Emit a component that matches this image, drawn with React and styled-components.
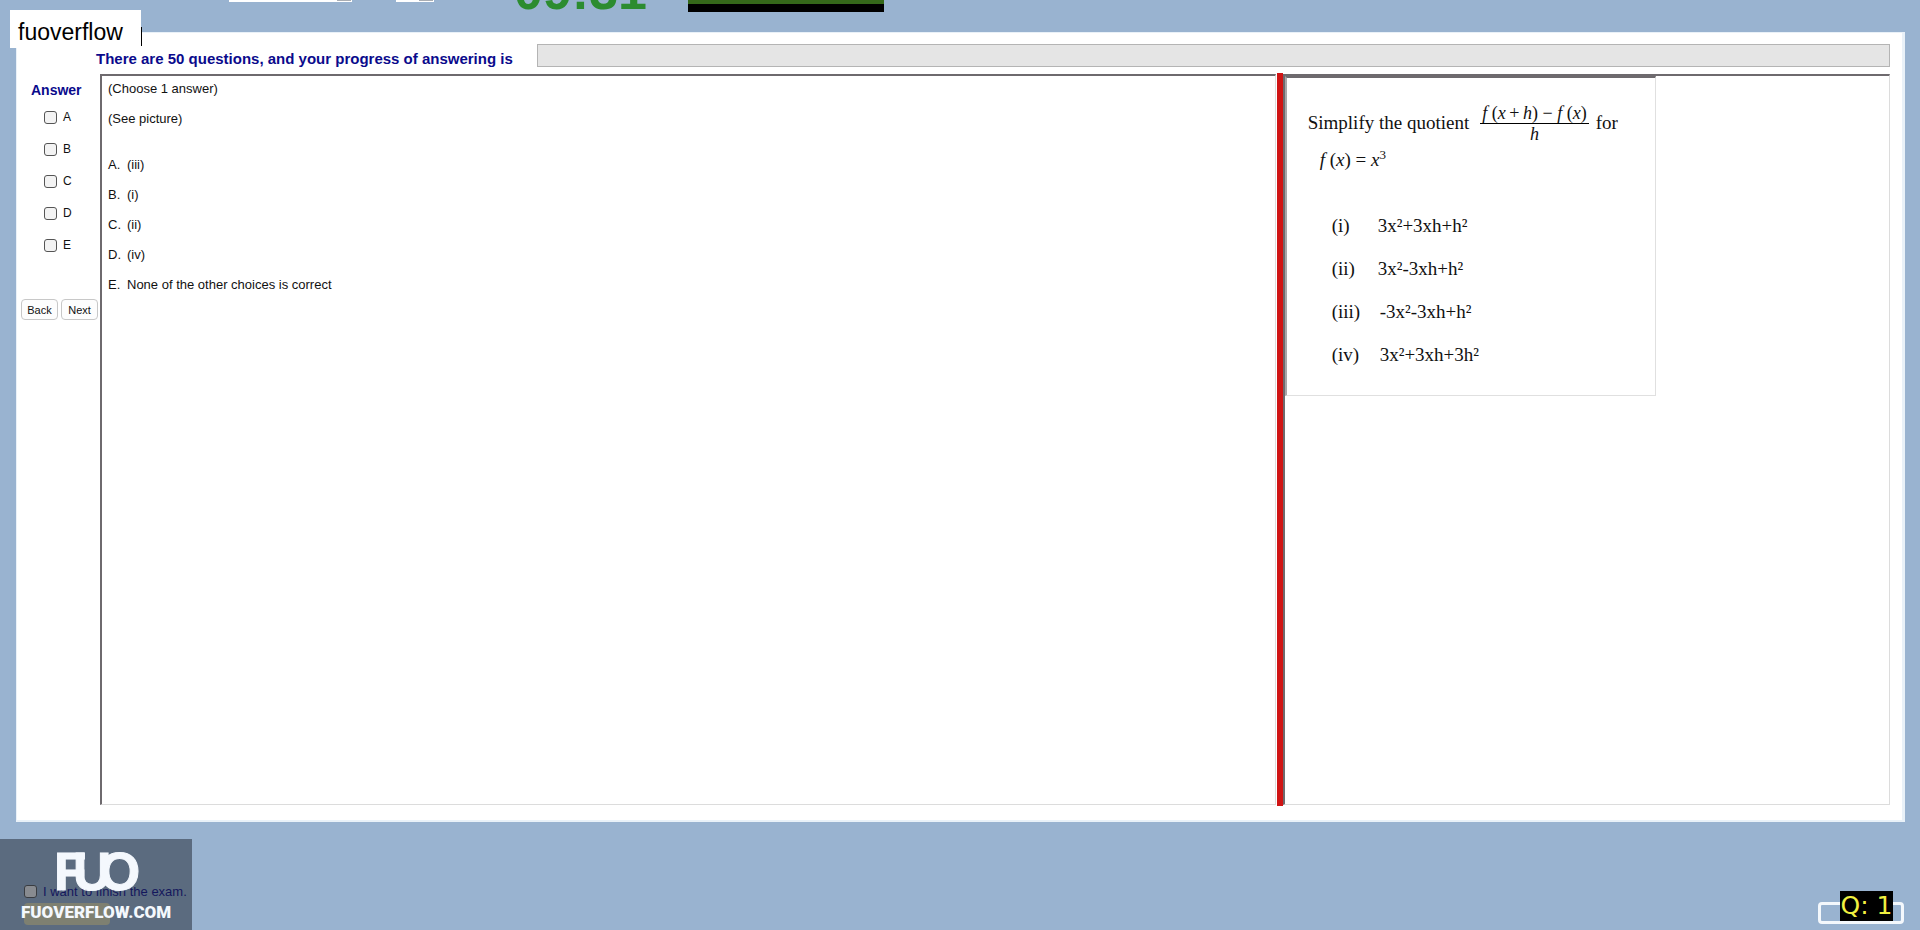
import React from 'react'
import styled, { createGlobalStyle } from 'styled-components'

const GlobalStyle = createGlobalStyle`
  * {
    box-sizing: border-box;
  }

  body {
    margin: 0;
    background: #99b3d0;
    color: #111;
    font-family: "Liberation Sans", Arial, sans-serif;
    font-size: 13px;
  }
`

const Page = styled.div`
  position: relative;
  display: flex;
  flex-direction: column;
  min-height: 100vh;
  overflow: hidden;
`

const Header = styled.header`
  display: flex;
  align-items: flex-end;
  height: 32px;
  padding: 0 0 20px 229px;
  overflow: hidden;
`

const HeaderSelect = styled.select`
  appearance: none;
  flex: none;
  width: ${props => props.$width}px;
  height: 24px;
  margin: 0 44px 10px 0;
  border: 0;
  background: linear-gradient(#a9adb3, #a9adb3) right 1px bottom 1px / 14px 20px no-repeat #fff;
`

const Clock = styled.time`
  height: 47px;
  margin: 0 41px 0 36px;
  color: #2c8c30;
  font-size: 52px;
  font-weight: bold;
  line-height: 52px;
`

const Banner = styled.div`
  width: 196px;
  height: 40px;
  border-bottom: 8px solid #000;
  background: #35691a;
`

const Panel = styled.main`
  flex: 1;
  display: flex;
  flex-direction: column;
  margin: 0 15px 0 16px;
  padding: 11px 12px 15px 0;
  border: solid #e9f1f8;
  border-width: 1px 3px 2px 1px;
  background: #fff;
`

const ProgressRow = styled.div`
  display: flex;
  align-items: flex-end;
  gap: 24px;
  padding-left: 79px;
  margin-bottom: 7px;
`

const ProgressLabel = styled.span`
  color: #0a0a8c;
  font-size: 15px;
  font-weight: bold;
  line-height: 16px;
`

const ProgressBar = styled.div`
  flex: 1;
  height: 23px;
  border: 1px solid #b4b4b4;
  background: #e5e5e5;
`

const Workspace = styled.div`
  flex: 1;
  display: flex;
`

const AnswerColumn = styled.form`
  width: 83px;
  padding-top: 8px;
`

const AnswerTitle = styled.h2`
  margin: 0 0 11px 14px;
  color: #0a0a8c;
  font-size: 14px;
  line-height: 16px;
`

const AnswerOption = styled.label`
  display: flex;
  align-items: center;
  gap: 6px;
  height: 16px;
  margin: 0 0 16px 27px;
  font-size: 12px;
`

const Checkbox = styled.input`
  appearance: none;
  width: 13px;
  height: 13px;
  margin: 0;
  border: 1px solid #555;
  border-radius: 3px;
  background: #f3f3f3;
`

const ButtonRow = styled.div`
  display: flex;
  gap: 3px;
  padding: 30px 0 0 4px;
`

const NavButton = styled.button`
  width: 37px;
  height: 21px;
  padding: 0;
  border: 1px solid #c8c8c8;
  border-radius: 4px;
  background: #fdfdfd;
  color: #111;
  font-family: inherit;
  font-size: 11px;
`

const Pane = styled.section`
  flex: ${props => props.$grow} 1 0;
  min-width: 0;
  border: solid #dcdcdc;
  border-width: 2px 1px 1px 2px;
  border-top-color: #6e6a6e;
  border-left-color: #6e6a6e;
`

const Splitter = styled.div`
  width: 6px;
  margin: -1px 0 -1px 1px;
  background: #d01414;
`

const Question = styled.div`
  padding: 5px 6px;
  line-height: 16px;
`

const Line = styled.p`
  margin: 0 0 14px;
`

const Choices = styled.ol`
  margin: 30px 0 0;
  padding: 0;
  list-style: none;
`

const Choice = styled.li`
  display: flex;
  margin-bottom: 14px;
`

const Letter = styled.span`
  width: 19px;
`

const Picture = styled.div`
  width: 371px;
  height: 320px;
  padding: 23px 0 0 21px;
  border: solid #e0e0e0;
  border-width: 2px 1px 1px 2px;
  border-top-color: #6e6a6e;
  border-left-color: #a8a6a8;
  font-family: "Liberation Serif", "Times New Roman", serif;
  font-size: 19px;
  line-height: 20px;
`

const Statement = styled.div`
  display: flex;
  align-items: center;
`

const Fraction = styled.span`
  display: flex;
  flex-direction: column;
  align-items: center;
  margin: 2px 7px 0 11px;
  font-size: 18px;
`

const Numerator = styled.span`
  padding: 0 2px;
  border-bottom: 1px solid #000;
`

const Formula = styled.div`
  padding: 6px 0 0 12px;

  sup {
    font-size: 13px;
    line-height: 0;
  }
`

const Expressions = styled.dl`
  display: grid;
  grid-template-columns: 46px auto;
  row-gap: 23px;
  margin: 46px 0 0 24px;
`

const Term = styled.dt`
  margin: 0;
`

const Value = styled.dd`
  margin: 0;
  padding-left: ${props => (props.$indent ? 2 : 0)}px;
`

const Footer = styled.footer`
  display: flex;
  justify-content: space-between;
  height: 108px;
`

const Brand = styled.div`
  position: absolute;
  left: 10px;
  top: 10px;
  width: 131px;
  padding: 10px 8px 4px;
  background: #fff;
  color: #000;
  font-size: 23px;
  line-height: 24px;

  &::after {
    content: "";
    position: absolute;
    right: -1px;
    bottom: 2px;
    width: 1px;
    height: 19px;
    background: #000;
  }
`

const FinishArea = styled.div`
  position: relative;
  width: 192px;
  margin-top: 17px;
  padding: 44px 0 0 24px;
`

const FinishOption = styled.label`
  display: flex;
  align-items: center;
  gap: 6px;
  height: 16px;
  color: #0a0a8c;
  white-space: nowrap;
`

const FinishButton = styled.button`
  display: block;
  width: 86px;
  height: 22px;
  margin-top: 4px;
  padding: 0;
  border: 0;
  border-radius: 4px;
  background: #dedcb4;
`

const Watermark = styled.div`
  position: absolute;
  inset: 0;
  background: rgba(30, 35, 45, 0.5);
  color: #f4f8fd;
  font-weight: bold;
  pointer-events: none;
`

const Logo = styled.svg`
  display: block;
  width: 192px;
  height: 62px;
  font-size: 53px;
`

const Domain = styled.div`
  padding-left: 21px;
  font-family: Roboto, "Liberation Sans", sans-serif;
  font-size: 17px;
  font-weight: 900;
  line-height: 22px;
`

const Counter = styled.div`
  position: relative;
  align-self: flex-end;
  width: 86px;
  height: 22px;
  margin: 0 16px 6px 0;
  border: 3px solid #f4f8fc;
  border-radius: 4px;
`

const CounterBadge = styled.output`
  position: absolute;
  right: 8px;
  bottom: 0;
  width: 53px;
  height: 30px;
  background: #000;
  color: #f0f040;
  font-family: "DejaVu Sans", sans-serif;
  font-size: 25px;
  line-height: 29px;
  text-align: center;
  white-space: pre;
`

const options = ['A', 'B', 'C', 'D', 'E']

const choices = [
  ['A.', '(iii)'],
  ['B.', '(i)'],
  ['C.', '(ii)'],
  ['D.', '(iv)'],
  ['E.', 'None of the other choices is correct']
]

const expressions = [
  { term: '(i)', value: '3x²+3xh+h²' },
  { term: '(ii)', value: '3x²-3xh+h²' },
  { term: '(iii)', value: '-3x²-3xh+h²', indent: true },
  { term: '(iv)', value: '3x²+3xh+3h²', indent: true }
]

const App = () => (
  <>
    <GlobalStyle />
    <Page>
      <Header>
        <HeaderSelect $width={123} aria-label="Font" />
        <HeaderSelect $width={38} aria-label="Size" />
        <Clock>09:31</Clock>
        <Banner />
      </Header>

      <Panel>
        <ProgressRow>
          <ProgressLabel>There are 50 questions, and your progress of answering is</ProgressLabel>
          <ProgressBar role="progressbar" aria-label="Progress" aria-valuenow={0} />
        </ProgressRow>

        <Workspace>
          <AnswerColumn>
            <AnswerTitle>Answer</AnswerTitle>
            {options.map(option => (
              <AnswerOption key={option}>
                <Checkbox type="checkbox" />
                {option}
              </AnswerOption>
            ))}
            <ButtonRow>
              <NavButton type="button">Back</NavButton>
              <NavButton type="button">Next</NavButton>
            </ButtonRow>
          </AnswerColumn>

          <Pane $grow={1176}>
            <Question>
              <Line>(Choose 1 answer)</Line>
              <Line>(See picture)</Line>
              <Choices>
                {choices.map(([letter, text]) => (
                  <Choice key={letter}>
                    <Letter>{letter}</Letter>
                    {text}
                  </Choice>
                ))}
              </Choices>
            </Question>
          </Pane>

          <Splitter />

          <Pane $grow={606}>
            <Picture>
              <Statement>
                Simplify the quotient
                <Fraction>
                  <Numerator><i>f</i> (<i>x</i>{'\u2009'}+{'\u2009'}<i>h</i>) − <i>f</i> (<i>x</i>)</Numerator>
                  <i>h</i>
                </Fraction>
                for
              </Statement>
              <Formula><i>f</i> (<i>x</i>) = <i>x</i><sup>3</sup></Formula>
              <Expressions>
                {expressions.map(({ term, value, indent }) => (
                  <React.Fragment key={term}>
                    <Term>{term}</Term>
                    <Value $indent={indent}>{value}</Value>
                  </React.Fragment>
                ))}
              </Expressions>
            </Picture>
          </Pane>
        </Workspace>
      </Panel>

      <Footer>
        <FinishArea>
          <FinishOption>
            <Checkbox type="checkbox" />
            I want to finish the exam.
          </FinishOption>
          <FinishButton type="button" aria-label="Finish" />
          <Watermark>
            <Logo viewBox="0 0 192 62">
              <text x="54 73 99" y="51" fill="#f4f8fd" stroke="#f4f8fd">FUO</text>
            </Logo>
            <Domain>FUOVERFLOW.COM</Domain>
          </Watermark>
        </FinishArea>
        <Counter>
          <CounterBadge>Q: 1</CounterBadge>
        </Counter>
      </Footer>

      <Brand>fuoverflow</Brand>
    </Page>
  </>
)

export default App
